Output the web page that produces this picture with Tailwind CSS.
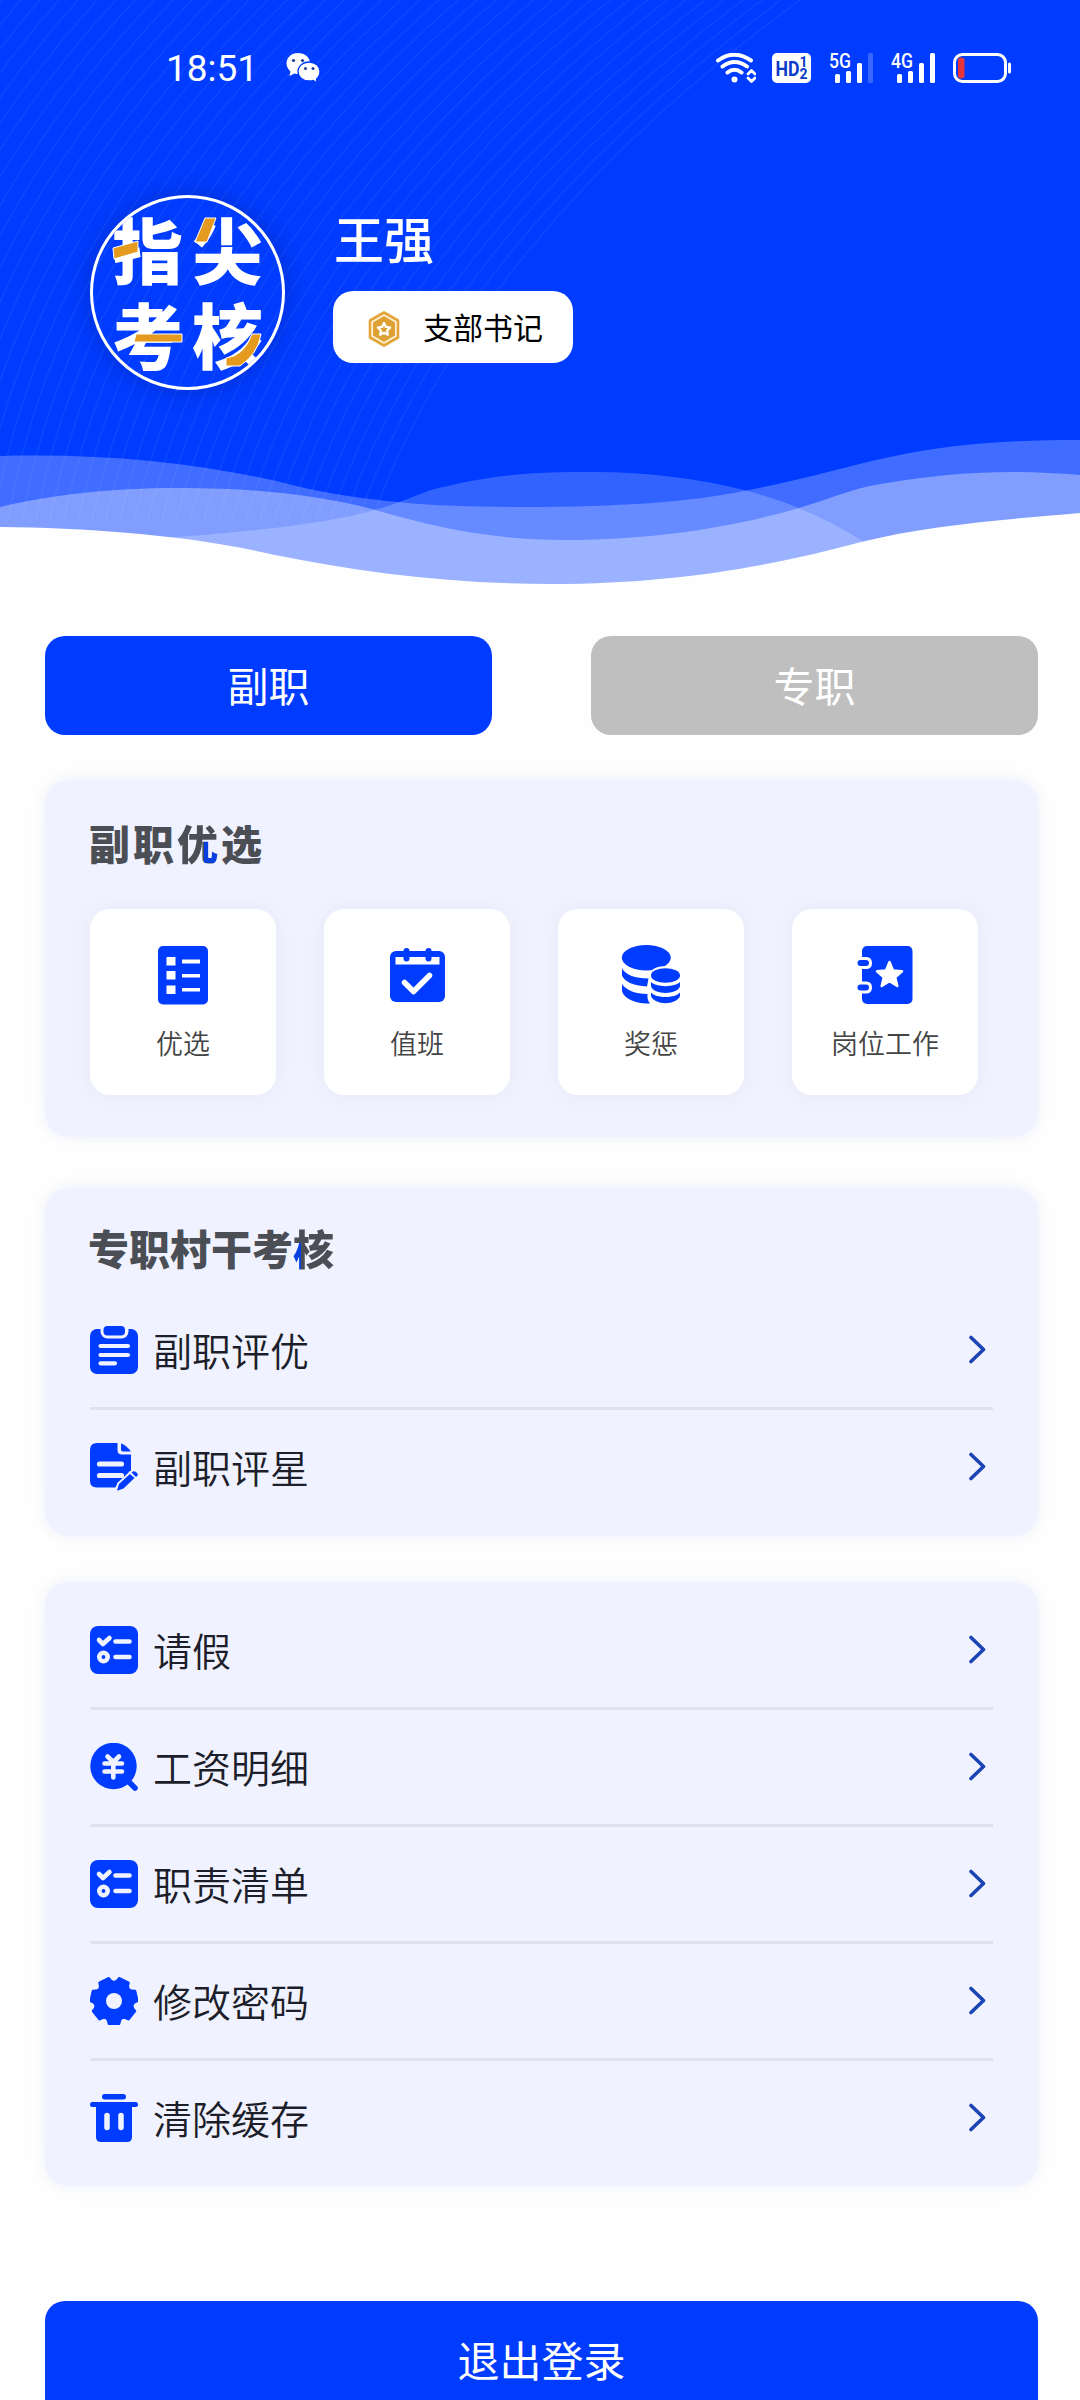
<!DOCTYPE html>
<html lang="zh-CN">
<head>
  <meta charset="UTF-8">
  <meta name="viewport" content="width=device-width, initial-scale=1.0">
  <title>指尖考核</title>
  <script src="https://cdn.jsdelivr.net/npm/@tailwindcss/browser@4"></script>
</head>
<body class="bg-[#fefefe] font-['Noto_Sans_CJK_SC',sans-serif]">
  <div class="w-[1080px] h-[2400px] overflow-hidden">

    <!-- Header -->
    <header class="relative h-[636px]">
      <svg class="absolute inset-0" width="1080" height="600" viewBox="0 0 1080 600">
        <rect width="1080" height="600" fill="#003cff"/>
        <g id="arcs" fill="none" stroke="#fff" stroke-opacity="0.06" stroke-width="1.5"></g>
        <path fill="#fff" fill-opacity="0.25" d="M0 456C110 453 210 464 296 486C370 503 440 507 523 507C620 507 690 502 744 491C820 476 850 465 895 456C950 444 1010 440 1080 440V600H0Z"/>
        <path fill="#fff" fill-opacity="0.2" d="M0 539C100 545 240 535 330 520C400 508 420 490 448 486C500 473 545 472 592 472C650 472 700 479 744 490C790 502 830 520 864 542L864 600H0Z"/>
        <path fill="#fff" fill-opacity="0.34" d="M0 507C50 495 110 488 179 488C260 488 320 496 372 509C430 526 490 540 565 540C660 540 740 525 799 508C830 499 850 489 881 484C960 470 1020 470 1080 475V600H0Z"/>
        <path fill="#fefefe" d="M0 527C90 528 190 535 275 555C360 572 450 584 551 584C680 584 780 564 861 542C930 525 1000 520 1080 513V600H0Z"/>
      </svg>

      <!-- Status bar -->
      <div class="relative flex h-[136px] items-center justify-between pl-[166px] pr-[69px] text-white">
        <div class="flex items-center">
          <span class="w-[120px] font-[Roboto,sans-serif] text-[37px] leading-none">18:51</span>
          <svg width="35" height="30" viewBox="0 0 35 30" fill="#fff">
            <path d="M12 0C5 0 .5 5 .5 10.500C.5 14 2.500 16.500 4.500 18.500L3.500 23L8.500 20.500Q10 21 12.500 21C19 21 24 16.500 24 10.500S19 0 12 0Z"/>
            <path stroke="#003cff" stroke-width="1.300" d="M23 9C16.500 9 12 13.500 12 18.500S16.500 28 23 28Q25.500 28 27 27.500L31 29.500L30.500 26Q34 23 34 18.500C34 13.500 29.500 9 23 9Z"/>
            <g fill="#1b3a9a"><circle cx="7.500" cy="7.500" r="1.600"/><circle cx="16.500" cy="7.500" r="1.600"/><circle cx="19.500" cy="15.500" r="1.500"/><circle cx="27" cy="15.500" r="1.500"/></g>
          </svg>
        </div>
        <div class="flex items-center">
          <svg class="mr-4" width="40" height="30" viewBox="0 0 40 30" fill="none" stroke="#fff" stroke-width="4" stroke-linecap="round">
            <path d="M2 7.500Q18 -4 35 7.500M6.500 13.500Q18.500 4.500 31 13.500M11.500 19.500Q18.500 14 25.500 19.500"/>
            <circle cx="18.500" cy="26.500" r="3" fill="#fff" stroke="none"/>
            <path stroke-width="2.800" stroke-linejoin="round" d="M32 21L35.500 17.500L39 21M32 25L35.500 28.500L39 25"/>
          </svg>
          <svg class="mr-[18px]" width="39" height="30" viewBox="0 0 39 30" font-family="Roboto, sans-serif" font-weight="700" fill="#0a3bc8">
            <rect width="39" height="30" rx="5" fill="#fff"/>
            <text x="3.500" y="22.500" font-size="21" textLength="24" lengthAdjust="spacingAndGlyphs">HD</text>
            <text x="27.500" y="14" font-size="14">1</text>
            <text x="27.500" y="25.500" font-size="14">2</text>
          </svg>
          <svg class="mr-[18px] overflow-visible" width="44" height="30" viewBox="0 0 44 30" fill="#fff">
            <text x="0" y="14.500" font-family="Roboto, sans-serif" font-size="19.500" font-weight="500" textLength="22" lengthAdjust="spacingAndGlyphs">5G</text>
            <rect x="6" y="21" width="5" height="9" rx="1.500"/><rect x="17" y="18" width="5" height="12" rx="1.500"/><rect x="28" y="10" width="5" height="20" rx="1.500"/><rect x="39" y="0" width="5" height="30" rx="1.500" opacity=".22"/>
          </svg>
          <svg class="mr-[18px] overflow-visible" width="44" height="30" viewBox="0 0 44 30" fill="#fff">
            <text x="0" y="14.500" font-family="Roboto, sans-serif" font-size="19.500" font-weight="500" textLength="22" lengthAdjust="spacingAndGlyphs">4G</text>
            <rect x="6" y="21" width="5" height="9" rx="1.500"/><rect x="17" y="18" width="5" height="12" rx="1.500"/><rect x="28" y="10" width="5" height="20" rx="1.500"/><rect x="39" y="0" width="5" height="30" rx="1.500"/>
          </svg>
          <svg width="58" height="30" viewBox="0 0 58 30">
            <rect x="1.500" y="1.500" width="51" height="27" rx="8" fill="none" stroke="#fff" stroke-width="3"/>
            <rect x="5" y="4.500" width="6.500" height="21" rx="3" fill="#e5343c"/>
            <rect x="55" y="9.500" width="3" height="11" rx="1.500" fill="#fff"/>
          </svg>
        </div>
      </div>

      <!-- Profile -->
      <div class="relative mt-[59px] flex pl-[90px]">
        <div class="relative size-[195px] overflow-hidden rounded-full border-[3px] border-white shadow-[0_0_24px_rgba(0,0,60,0.25)]">
          <div class="grid w-[160px] translate-x-[19px] translate-y-[7px] grid-cols-2 text-[71px] leading-[85px] font-black text-white">
            <span>指</span><span>尖</span><span>考</span><span>核</span>
          </div>
          <svg class="absolute inset-0" width="189" height="189" viewBox="0 0 189 189" fill="#e39a1f" stroke="#fff" stroke-width="1">
            <path d="M20 50L45 43V54L21 61Z"/>
            <path d="M112 20H123L114 44H102Z"/>
            <path d="M43 136H89V144H41Z"/>
            <path d="M159 136H168Q165 156 147 168H133V160Q151 158 159 136Z"/>
          </svg>
        </div>
        <div class="ml-[48px] flex flex-col items-start pt-[16px]">
          <h1 class="ml-px h-[80px] text-[50px] leading-[52px] font-medium text-white">王强</h1>
          <div class="flex h-[72px] w-[240px] items-center rounded-[20px] bg-white pl-[35px]">
            <svg class="mt-[4px]" width="32" height="36" viewBox="0 0 32 36" fill="none" stroke-linejoin="round">
              <path d="M16 1.500L30 9.500V26.500L16 34.500L2 26.500V9.500Z" stroke="#e2a53a" stroke-width="2.600" fill="#fff3dc"/>
              <path d="M16 5L27 11.400V24.600L16 31L5 24.600V11.400Z" fill="#dda033"/>
              <path d="M16 12L17.900 15.900L22.300 16.500L19.100 19.500L19.900 23.800L16 21.700L12.100 23.800L12.900 19.500L9.700 16.500L14.100 15.900Z" fill="#dda033" stroke="#fff" stroke-width="2.200"/>
            </svg>
            <span class="mb-[3px] ml-[23px] text-[30px] leading-none text-black">支部书记</span>
          </div>
        </div>
      </div>
    </header>

    <main class="px-[45px]">
      <!-- Tabs -->
      <div class="flex w-[993px] justify-between text-[41px] text-white">
        <button class="h-[99px] w-[447px] rounded-[20px] bg-[#003cff] pb-[2px]">副职</button>
        <button class="h-[99px] w-[447px] rounded-[20px] bg-[#bfbfbf] pb-[2px]">专职</button>
      </div>

      <!-- Quick entries -->
      <section class="mt-[45px] h-[357px] w-[993px] rounded-[24px] bg-[#f0f2ff] px-[45px] pt-[36px] shadow-[0_0_12px_#f0f2ff,0_0_36px_rgba(0,0,0,0.02)]">
        <h2 class="-ml-px flex h-[93px] gap-[3px] text-[41px] leading-[52px] font-black text-[#4b4e55]">
          <span>副</span><span>职</span><span class="bg-[#4b4e55] bg-[linear-gradient(#083fe0,#083fe0)] bg-size-[14px_23px] bg-position-[27px_24px] bg-no-repeat bg-clip-text text-transparent">优</span><span>选</span>
        </h2>
        <div class="flex gap-[48px] text-[27px] font-[350] text-[#444]">
          <div class="flex size-[186px] flex-col items-center rounded-[20px] bg-white pt-[35px] shadow-[0_0_24px_rgba(0,0,0,0.045)]">
            <svg width="60" height="62" viewBox="0 0 60 62" fill="#003cff">
              <rect x="5" y="2" width="50" height="58.500" rx="5"/>
              <path fill="#fff" d="M13.500 13H22.500V21.500H13.500ZM13.500 27H22.500V35.500H13.500ZM13.500 41.500H22.500V50H13.500ZM29 15.500H47V19.500H29ZM29 30H47V33.500H29ZM29 44H47V47.500H29Z"/>
            </svg>
            <span class="mt-[17px] leading-[40px]">优选</span>
          </div>
          <div class="flex size-[186px] flex-col items-center rounded-[20px] bg-white pt-[35px] shadow-[0_0_24px_rgba(0,0,0,0.045)]">
            <svg width="60" height="62" viewBox="0 0 60 62" fill="#003cff">
              <rect x="3" y="7" width="55" height="51" rx="6"/>
              <path fill="#fff" d="M8.500 13H52.500V20.500H8.500Z"/>
              <rect x="16.500" y="4" width="6" height="13.500" rx="3"/><rect x="38.500" y="4" width="6" height="13.500" rx="3"/>
              <path fill="none" stroke="#fff" stroke-width="5.500" stroke-linecap="round" stroke-linejoin="round" d="M17.500 38.500L26.500 47.500L42.500 31.500"/>
            </svg>
            <span class="mt-[17px] leading-[40px]">值班</span>
          </div>
          <div class="flex size-[186px] flex-col items-center rounded-[20px] bg-white pt-[35px] shadow-[0_0_24px_rgba(0,0,0,0.045)]">
            <svg width="60" height="62" viewBox="0 0 60 62" fill="#003cff">
              <ellipse cx="25.300" cy="13.700" rx="24.500" ry="12.700"/>
              <path d="M1 24.500C5 31 14 34.500 27.500 34.500L26 42.500C12 42 3 37 1 31.500Z"/>
              <path d="M1 40C5 46 14 50 26.500 50C26 54 27 57 29 59.500C14 60 2 54 1 46.500Z"/>
              <ellipse cx="44.500" cy="31.500" rx="16.500" ry="9.500" fill="#fff"/>
              <ellipse cx="44.500" cy="31.500" rx="14.500" ry="7.300"/>
              <path d="M30 38C35 43.500 54 43.500 59 38V42.500C56 51 33 51 30 42.500Z"/>
              <path d="M30 48.500C35 54.500 54 54.500 59 48.500V52C56 61.500 33 61.500 30 52Z"/>
            </svg>
            <span class="mt-[17px] leading-[40px]">奖惩</span>
          </div>
          <div class="flex size-[186px] flex-col items-center rounded-[20px] bg-white pt-[35px] shadow-[0_0_24px_rgba(0,0,0,0.045)]">
            <svg width="60" height="62" viewBox="0 0 60 62" fill="#003cff">
              <rect x="7" y="2" width="50.500" height="58" rx="5"/>
              <path fill="#fff" d="M2 13H11Q17 13 17 19T11 25H2ZM2 37.500H11Q17 37.500 17 43.500T11 49.500H2Z"/>
              <rect x="2.500" y="16" width="11.500" height="6" rx="3"/><rect x="2.500" y="40.500" width="11.500" height="6" rx="3"/>
              <path fill="#fff" stroke="#fff" stroke-width="2.500" stroke-linejoin="round" d="M34.500 18L38 26.500L47 27.300L40.200 33.200L42.300 42L34.500 37.300L26.700 42L28.800 33.200L22 27.300L31 26.500Z"/>
            </svg>
            <span class="mt-[17px] leading-[40px]">岗位工作</span>
          </div>
        </div>
      </section>

      <!-- Cadre assessment -->
      <section class="mt-[51px] h-[348px] w-[993px] rounded-[24px] bg-[#f0f2ff] px-[45px] pt-[33px] shadow-[0_0_12px_#f0f2ff,0_0_36px_rgba(0,0,0,0.02)]">
        <h2 class="-ml-[2px] flex h-[72px] text-[41px] leading-[52px] font-black text-[#4b4e55]">专职村干考<span class="bg-[#4b4e55] bg-[linear-gradient(#083fe0,#083fe0)] bg-size-[8px_30px] bg-position-[0px_22px] bg-no-repeat bg-clip-text text-transparent">核</span></h2>
        <div class="w-[903px] text-[39px] leading-none font-[350] text-[#1c1e2a]">
          <a class="flex h-[117px] items-center border-b-[3px] border-[#dfe1ee]">
            <svg width="48" height="48" viewBox="0 0 48 48" fill="#003cff">
              <rect y="3" width="48" height="45" rx="7"/>
              <rect x="10.500" y="-6" width="28" height="18.500" rx="7" fill="#f0f2ff"/>
              <rect x="13.500" y="0" width="21.500" height="9.500" rx="4"/>
              <path stroke="#f0f2ff" stroke-width="4.200" stroke-linecap="round" d="M10.500 20H38M10.500 29H38M10.500 37.300H25"/>
            </svg>
            <span class="mb-[2px] ml-[15px] flex-1">副职评优</span>
            <svg class="mr-[7px]" width="18" height="30" viewBox="0 0 18 30" fill="none" stroke="#1b45b4" stroke-width="3.600" stroke-linecap="round" stroke-linejoin="round"><path d="M3 2.500L15.500 14.500L3 26.500"/></svg>
          </a>
          <a class="flex h-[114px] items-center">
            <svg width="48" height="48" viewBox="0 0 48 48" fill="#003cff">
              <path d="M7 0H27.500V7Q27.500 11.500 32 11.500H41V28L25 44.500H7Q0 44.500 0 38V7Q0 0 7 0Z"/>
              <path d="M31 .5Q36 2 41 8.500H33Q31 8.500 31 6.500Z"/>
              <path stroke="#f0f2ff" stroke-width="5.200" stroke-linecap="round" d="M9.500 21H31.500M9.500 32.500H31.500"/>
              <path d="M27 47.800L29 41L40 31L44.500 35L33.500 45.500ZM41.500 29.500L43.500 28.200Q45.500 28 47.500 30.500Q48.500 32 46 34Z" stroke="#f0f2ff" stroke-width="4" paint-order="stroke"/>
            </svg>
            <span class="mb-[2px] ml-[15px] flex-1">副职评星</span>
            <svg class="mr-[7px]" width="18" height="30" viewBox="0 0 18 30" fill="none" stroke="#1b45b4" stroke-width="3.600" stroke-linecap="round" stroke-linejoin="round"><path d="M3 2.500L15.500 14.500L3 26.500"/></svg>
          </a>
        </div>
      </section>

      <!-- Menu -->
      <section class="mt-[46px] h-[604px] w-[993px] rounded-[24px] bg-[#f0f2ff] px-[45px] pt-[11px] shadow-[0_0_12px_#f0f2ff,0_0_36px_rgba(0,0,0,0.02)]">
        <div class="w-[903px] text-[39px] leading-none font-[350] text-[#1c1e2a]">
          <a class="flex h-[117px] items-center border-b-[3px] border-[#dfe1ee]">
            <svg width="48" height="48" viewBox="0 0 48 48" fill="none" stroke="#f0f2ff" stroke-width="4.600" stroke-linecap="round" stroke-linejoin="round">
              <rect width="48" height="48" rx="8" fill="#003cff" stroke="none"/>
              <path d="M9 14L13 18L19.500 12M25.500 15.500H39.500M25.500 31H39.500"/><circle cx="13.500" cy="31" r="4.200"/>
            </svg>
            <span class="mb-px ml-[15px] flex-1">请假</span>
            <svg class="mr-[7px]" width="18" height="30" viewBox="0 0 18 30" fill="none" stroke="#1b45b4" stroke-width="3.600" stroke-linecap="round" stroke-linejoin="round"><path d="M3 2.500L15.500 14.500L3 26.500"/></svg>
          </a>
          <a class="flex h-[117px] items-center border-b-[3px] border-[#dfe1ee]">
            <svg width="48" height="48" viewBox="0 0 48 48" fill="none" stroke-linecap="round" stroke-linejoin="round">
              <circle cx="23.500" cy="23" r="23.200" fill="#003cff"/>
              <path stroke="#003cff" stroke-width="5.500" d="M37 37L45 45"/>
              <path stroke="#f0f2ff" stroke-width="4.600" d="M17.500 13.500L23.300 19L29 13.500M14.500 20.500H32M14.500 28.500H32M23.300 20V34.500"/>
            </svg>
            <span class="mb-px ml-[15px] flex-1">工资明细</span>
            <svg class="mr-[7px]" width="18" height="30" viewBox="0 0 18 30" fill="none" stroke="#1b45b4" stroke-width="3.600" stroke-linecap="round" stroke-linejoin="round"><path d="M3 2.500L15.500 14.500L3 26.500"/></svg>
          </a>
          <a class="flex h-[117px] items-center border-b-[3px] border-[#dfe1ee]">
            <svg width="48" height="48" viewBox="0 0 48 48" fill="none" stroke="#f0f2ff" stroke-width="4.600" stroke-linecap="round" stroke-linejoin="round">
              <rect width="48" height="48" rx="8" fill="#003cff" stroke="none"/>
              <path d="M9 14L13 18L19.500 12M25.500 15.500H39.500M25.500 31H39.500"/><circle cx="13.500" cy="31" r="4.200"/>
            </svg>
            <span class="mb-px ml-[15px] flex-1">职责清单</span>
            <svg class="mr-[7px]" width="18" height="30" viewBox="0 0 18 30" fill="none" stroke="#1b45b4" stroke-width="3.600" stroke-linecap="round" stroke-linejoin="round"><path d="M3 2.500L15.500 14.500L3 26.500"/></svg>
          </a>
          <a class="flex h-[117px] items-center border-b-[3px] border-[#dfe1ee]">
            <svg width="48" height="48" viewBox="0 0 48 48" fill="#003cff">
              <circle cx="24" cy="24" r="19.500"/>
              <g stroke="#003cff" stroke-width="2" stroke-linejoin="round">
                <path id="tooth" d="M15 40L17.800 43.500L18.700 47H29.300L30.200 43.500L33 40Z"/>
                <use href="#tooth" transform="rotate(51.430 24 24)"/><use href="#tooth" transform="rotate(102.860 24 24)"/><use href="#tooth" transform="rotate(154.290 24 24)"/>
                <use href="#tooth" transform="rotate(205.710 24 24)"/><use href="#tooth" transform="rotate(257.140 24 24)"/><use href="#tooth" transform="rotate(308.570 24 24)"/>
              </g>
              <circle cx="24" cy="24" r="8" fill="#f0f2ff"/>
            </svg>
            <span class="mb-px ml-[15px] flex-1">修改密码</span>
            <svg class="mr-[7px]" width="18" height="30" viewBox="0 0 18 30" fill="none" stroke="#1b45b4" stroke-width="3.600" stroke-linecap="round" stroke-linejoin="round"><path d="M3 2.500L15.500 14.500L3 26.500"/></svg>
          </a>
          <a class="flex h-[114px] items-center">
            <svg width="48" height="48" viewBox="0 0 48 48" fill="#003cff">
              <rect x="12" y="0" width="24" height="5.500" rx="2.700"/><rect x="0" y="8" width="48" height="5" rx="2.500"/>
              <path d="M6 10H42V43Q42 48 37 48H11Q6 48 6 43Z"/>
              <path stroke="#f0f2ff" stroke-width="5.500" stroke-linecap="round" d="M17 21.500V33.500M31 21.500V33.500"/>
            </svg>
            <span class="mb-px ml-[15px] flex-1">清除缓存</span>
            <svg class="mr-[7px]" width="18" height="30" viewBox="0 0 18 30" fill="none" stroke="#1b45b4" stroke-width="3.600" stroke-linecap="round" stroke-linejoin="round"><path d="M3 2.500L15.500 14.500L3 26.500"/></svg>
          </a>
        </div>
      </section>

      <button class="mt-[115px] h-[121px] w-[993px] rounded-[20px] bg-[#003cff] pb-[6px] text-[42px] text-white">退出登录</button>
    </main>
  </div>

  <script>
    // Faint arcs on the left of the header
    const arcs = document.getElementById('arcs');
    for (let i = 0; i < 48; i++) {
      const path = document.createElementNS('http://www.w3.org/2000/svg', 'path');
      const bottom = 372 - i * 14;
      const top = 800 - i * 19;
      path.setAttribute('d', `M${top} 0Q${bottom + 100 - i * 2} 240 ${bottom} 520`);
      arcs.appendChild(path);
    }
  </script>
</body>
</html>
